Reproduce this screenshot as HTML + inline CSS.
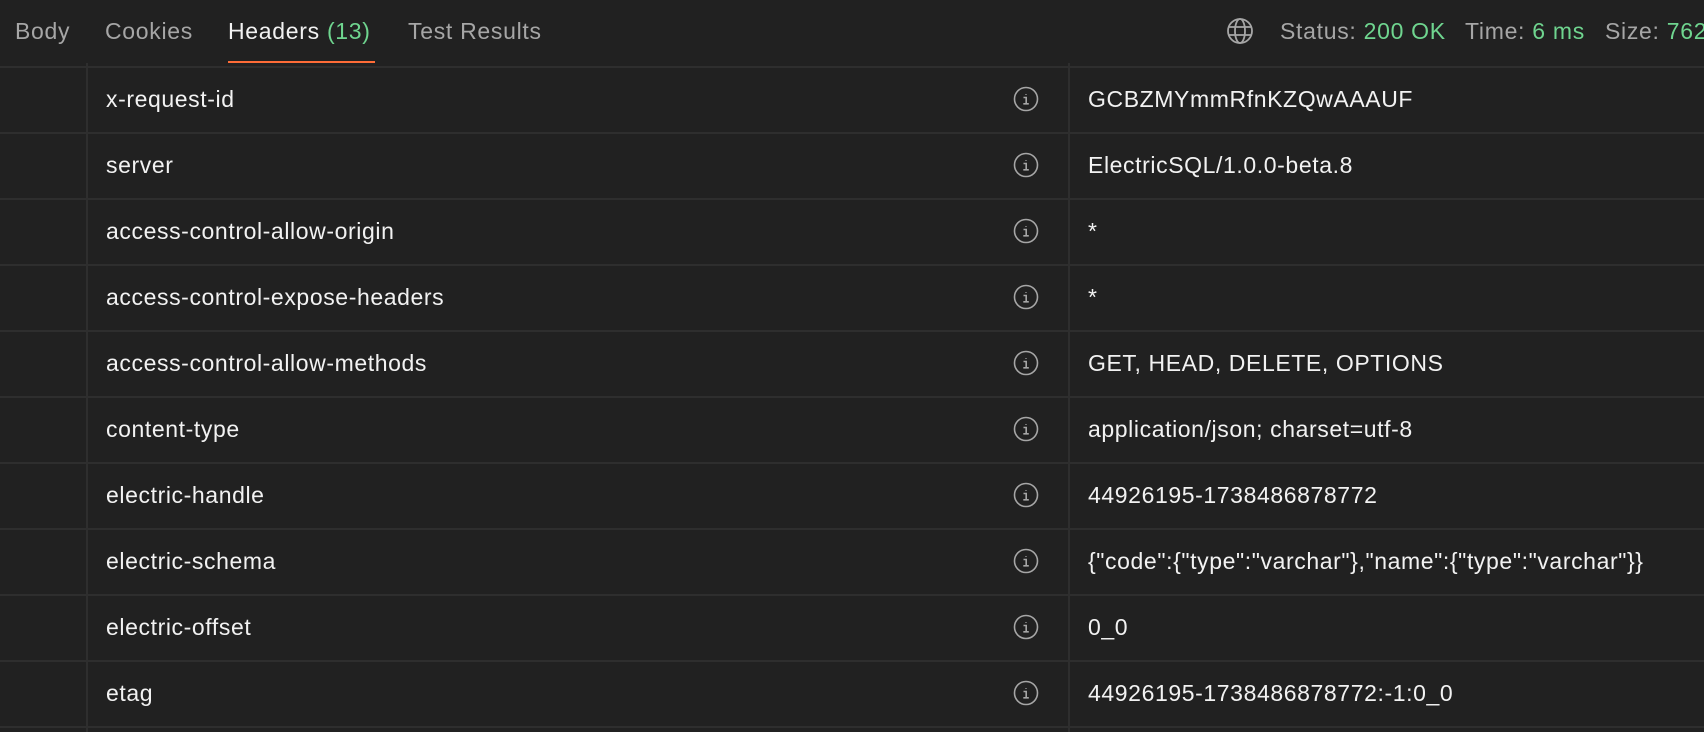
<!DOCTYPE html>
<html><head><meta charset="utf-8"><style>
html,body{margin:0;padding:0;background:#212121;width:1704px;height:732px;overflow:hidden;font-family:"Liberation Sans",sans-serif;}
.t{position:absolute;font-size:23px;letter-spacing:0.7px;white-space:nowrap;line-height:1;}
.g{color:#a6a6a6}.w{color:#f2f2f2}.gr{color:#6fd58f}
.hl{position:absolute;left:0;width:1704px;height:2px;background:#2e2e2e}
.row{position:absolute;left:0;width:1704px;height:66px}
.k{position:absolute;left:106px;top:21px;font-size:23px;letter-spacing:0.6px;color:#f2f2f2;white-space:nowrap;line-height:1}
.v{position:absolute;left:1088px;top:21px;font-size:23px;letter-spacing:0.6px;color:#f2f2f2;white-space:nowrap;line-height:1}
.i{position:absolute;left:1013px;top:19px}
</style></head><body>
<div class="t g" style="left:15px;top:20px">Body</div>
<div class="t g" style="left:105px;top:20px">Cookies</div>
<div class="t w" style="left:228px;top:20px">Headers <span class="gr">(13)</span></div>
<div style="position:absolute;left:228px;top:61px;width:147px;height:2px;background:#ff6c37"></div>
<div class="t g" style="left:408px;top:20px">Test Results</div>
<svg style="position:absolute;left:1226px;top:17px" width="28" height="28" viewBox="0 0 28 28" fill="none" stroke="#a6a6a6" stroke-width="1.8"><circle cx="14" cy="14" r="12"/><ellipse cx="14" cy="14" rx="5" ry="12"/><path d="M3 10h22M3 18h22"/></svg>
<div class="t g" style="left:1280px;top:20px">Status: <span class="gr">200 OK</span></div>
<div class="t g" style="left:1465px;top:20px">Time: <span class="gr">6 ms</span></div>
<div class="t g" style="left:1605px;top:20px">Size: <span class="gr">762 B</span></div>
<div style="position:absolute;left:86px;top:63px;width:2px;height:669px;background:#2e2e2e"></div>
<div style="position:absolute;left:1068px;top:63px;width:2px;height:669px;background:#2e2e2e"></div>
<div class="hl" style="top:66px"></div>
<div id="rows"></div>
<script>
var d=[["x-request-id","GCBZMYmmRfnKZQwAAAUF"],["server","ElectricSQL/1.0.0-beta.8"],["access-control-allow-origin","*"],["access-control-expose-headers","*"],["access-control-allow-methods","GET, HEAD, DELETE, OPTIONS"],["content-type","application/json; charset=utf-8"],["electric-handle","44926195-1738486878772"],["electric-schema","{\"code\":{\"type\":\"varchar\"},\"name\":{\"type\":\"varchar\"}}"],["electric-offset","0_0"],["etag","44926195-1738486878772:-1:0_0"]];
var h="";
d.forEach(function(r,n){var top=67+n*66;
h+='<div class="row" style="top:'+top+'px"><div class="k"></div><svg class="i" width="26" height="26" viewBox="0 0 26 26" fill="none" stroke="#a6a6a6" stroke-width="1.6"><circle cx="13" cy="13" r="11.5"/><path d="M13 8.2v0.8M10.5 11.5h2.7v6M10.3 17.8h5.5"/></svg><div class="v"></div></div><div class="hl" style="top:'+(top+65)+'px"></div>';});
document.getElementById("rows").innerHTML=h;
var rs=document.querySelectorAll(".row");
rs.forEach(function(e,n){e.querySelector(".k").textContent=d[n][0];e.querySelector(".v").textContent=d[n][1];});
</script>
</body></html>
